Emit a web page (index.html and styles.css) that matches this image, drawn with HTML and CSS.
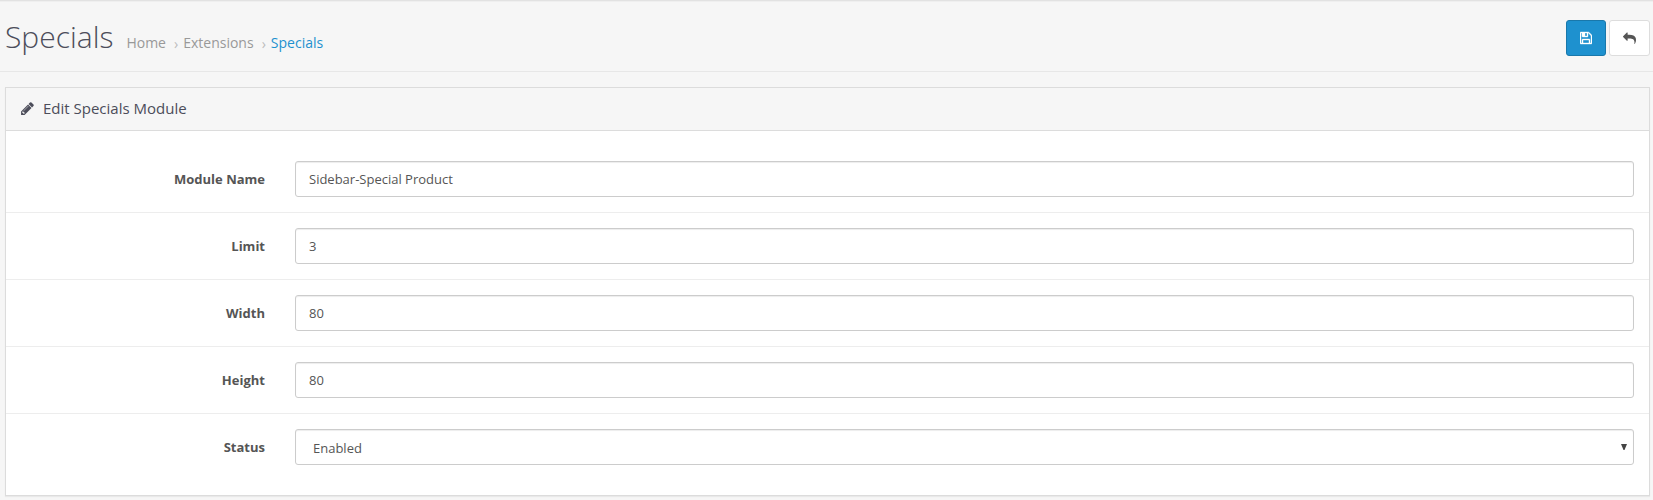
FILE: index.html
```html
<!DOCTYPE html>
<html lang="en">
<head>
<meta charset="utf-8">
<title>Specials</title>
<link rel="stylesheet" href="styles.css">
</head>
<body>
<header class="page-header">
  <h1>Specials</h1>
  <ul class="breadcrumb">
    <li>Home</li>
    <li>Extensions</li>
    <li class="current">Specials</li>
  </ul>
  <div class="actions">
    <button class="btn btn-primary" aria-label="Save"><svg class="icon icon-save" viewBox="128 0 1536 1792"><path d="M512 1536h768v-384h-768v384zm896 0h128v-896q0-14-10-38.5t-20-34.5l-281-281q-10-10-34-20t-39-10v416q0 40-28 68t-68 28h-576q-40 0-68-28t-28-68v-416h-128v1280h128v-416q0-40 28-68t68-28h832q40 0 68 28t28 68v416zm-384-928v-320q0-13-9.5-22.5t-22.5-9.5h-192q-13 0-22.5 9.5t-9.5 22.5v320q0 13 9.5 22.5t22.5 9.5h192q13 0 22.5-9.5t9.5-22.5zm640 32v928q0 40-28 68t-68 28h-1344q-40 0-68-28t-28-68v-1344q0-40 28-68t68-28h928q40 0 88 20t76 48l280 280q28 28 48 76t20 88z"/></svg></button>
    <button class="btn btn-default" aria-label="Back"><svg class="icon icon-reply" viewBox="0 0 1792 1792"><path d="M1792 1120q0 166-127 451-3 7-10.5 24t-13.5 30-13 22q-12 17-28 17-15 0-23.5-10t-8.5-25q0-9 2.5-26.5t2.5-23.5q5-68 5-123 0-101-17.5-181t-48.5-138.5-80-101-105.5-69.5-133-42.5-154-21.5-175.5-6h-224v256q0 26-19 45t-45 19-45-19l-512-512q-19-19-19-45t19-45l512-512q19-19 45-19t45 19 19 45v256h224q713 0 875 403 53 134 53 333z"/></svg></button>
  </div>
</header>
<main class="panel">
  <div class="panel-heading">
    <svg class="icon icon-pencil" viewBox="0 0 1792 1792"><path d="M491 1536l91-91-235-235-91 91v107h128v128h107zm523-928q0-22-22-22-10 0-17 7l-542 542q-7 7-7 17 0 22 22 22 10 0 17-7l542-542q7-7 7-17zm-54-192l416 416-832 832h-416v-416zm683 96q0 53-37 90l-166 166-416-416 166-165q36-38 90-38 53 0 91 38l235 234q37 39 37 91z"/></svg>
    <h3>Edit Specials Module</h3>
  </div>
  <form class="panel-body">
    <div class="form-group"><label for="name">Module Name</label><input class="control" id="name" type="text" value="Sidebar-Special Product"></div>
    <div class="form-group"><label for="limit">Limit</label><input class="control" id="limit" type="text" value="3"></div>
    <div class="form-group"><label for="width">Width</label><input class="control" id="width" type="text" value="80"></div>
    <div class="form-group"><label for="height">Height</label><input class="control" id="height" type="text" value="80"></div>
    <div class="form-group"><label>Status</label><div class="control select"><span>Enabled</span><svg class="caret" viewBox="0 0 6 6"><path d="M0 0h6L3.5 6h-1z"/></svg></div></div>
  </form>
</main>
</body>
</html>
```
FILE: styles.css
```css
* { box-sizing: border-box; }
body {
  margin: 0;
  height: 500px;
  overflow: hidden;
  background: #f6f6f6;
  color: #555;
  font: 13px/20px "Open Sans", sans-serif;
}
.page-header {
  display: flex;
  align-items: flex-start;
  height: 72px;
  padding: 20px 3px 0 5px;
  border-bottom: 1px solid #e7e7e7;
  box-shadow: inset 0 1px 0 #e2e2e2, inset 0 2px 0 #efefef;
}
h1 {
  margin: 0;
  color: #4c4d5a;
  font-size: 30px;
  font-weight: 300;
  line-height: 33px;
}
.breadcrumb {
  display: flex;
  margin: 13px 0 0;
  padding: 0 0 0 13px;
  list-style: none;
  color: #999;
  font-size: 14px;
}
.breadcrumb li { display: flex; }
.breadcrumb li + li::before {
  content: "›";
  padding: 1px 5px 0 8px;
  color: #bbb;
}
.breadcrumb .current { color: #1e91cf; }
.actions {
  display: flex;
  gap: 3px;
  margin-left: auto;
}
.btn {
  display: flex;
  align-items: center;
  justify-content: center;
  height: 36px;
  padding: 0;
  border: 1px solid #ddd;
  border-radius: 3px;
}
.btn-primary {
  width: 40px;
  border-color: #1978ab;
  background: #1e91cf;
  color: #fff;
}
.btn-default {
  width: 41px;
  background: #fff;
  color: #555;
}
.icon { flex: none; fill: currentColor; }
.icon-save {
  width: 12px;
  height: 14px;
  stroke: currentColor;
  stroke-width: 50;
}
.icon-reply { width: 13px; height: 13px; }
.icon-pencil { width: 15px; height: 15px; margin-right: 8px; }
.panel {
  height: 409px;
  margin: 15px 3px 0 5px;
  border: 1px solid #dcdcdc;
  background: #fff;
  box-shadow: 0 1px 1px rgba(0, 0, 0, .05);
}
.panel-heading {
  display: flex;
  align-items: center;
  height: 43px;
  padding: 0 14px 1px;
  border-bottom: 1px solid #dcdcdc;
  background: #f6f6f6;
  color: #4c4d5a;
}
h3 {
  margin: 0;
  padding-bottom: 1px;
  font-size: 15px;
  font-weight: 400;
}
.panel-body { padding: 15px 0; }
.form-group {
  display: grid;
  grid-template-columns: 259px 1fr;
  column-gap: 30px;
  align-items: center;
  padding: 15px 15px 15px 0;
}
.form-group + .form-group { border-top: 1px solid #ededed; }
label {
  text-align: right;
  font-weight: 700;
}
.control {
  width: 100%;
  height: 36px;
  padding: 8px 13px;
  border: 1px solid #ccc;
  border-radius: 3px;
  background: #fff;
  box-shadow: inset 0 1px 1px rgba(0, 0, 0, .075);
  color: #555;
  font: inherit;
}
.select {
  display: flex;
  align-items: center;
  justify-content: space-between;
  padding: 2px 6px 0 17px;
}
.caret { width: 6px; height: 6px; margin-bottom: 2px; fill: #444; }
```
